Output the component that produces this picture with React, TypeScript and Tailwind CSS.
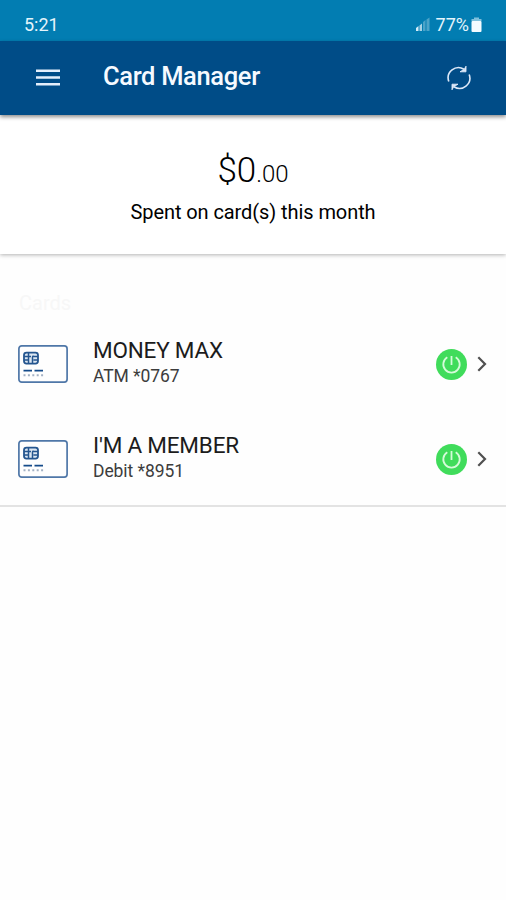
type Card = {
  name: string;
  detail: string;
};

const cards: Card[] = [
  { name: "MONEY MAX", detail: "ATM *0767" },
  { name: "I'M A MEMBER", detail: "Debit *8951" },
];

function SignalIcon() {
  return (
    <svg width="15" height="15" viewBox="0 0 15 15">
      <path d="M0 14v-3l2.5-2v5z" fill="#d3edf8" />
      <path d="M3.500 14V8.500L6 6.500V14z" fill="#a5d2e6" />
      <path d="M7 14V5L9.500 3v11z" fill="#4ba3c8" />
      <path d="M10.500 14V2.500L13.500 0.500V14z" fill="#4ba3c8" />
    </svg>
  );
}

function BatteryIcon() {
  return (
    <svg width="11" height="15" viewBox="0 0 11 15">
      <path d="M3 0.500h5v1.500h2.500v2H0.500v-2H3z" fill="#7fc0dc" />
      <rect x="0.500" y="4" width="10" height="11" rx="1" fill="#f4fbff" />
    </svg>
  );
}

function RefreshIcon() {
  return (
    <svg
      width="24"
      height="26"
      viewBox="0 0 24 26"
      fill="none"
      stroke="#dce8f8"
      strokeWidth="1.600"
    >
      <path d="M1.800 16.500A10.300 10.300 0 0 1 17 4.300" />
      <path d="M13 6.800h6V1.200L17.300 4.300z" fill="#dce8f8" strokeWidth="0.900" />
      <path d="M22.200 9.500A10.300 10.300 0 0 1 7 21.700" />
      <path d="M11 19.200h-6v5.600l1.700-3.100z" fill="#dce8f8" strokeWidth="0.900" />
    </svg>
  );
}

function CardIcon() {
  return (
    <svg width="50" height="38" viewBox="0 0 50 38" fill="none">
      <rect x="0.900" y="0.900" width="48.200" height="36.200" rx="2.800" stroke="#4f77a8" strokeWidth="1.700" />
      <rect x="6" y="7.600" width="14" height="11" rx="2.500" fill="#dce7f2" stroke="#25568f" strokeWidth="1.800" />
      <path
        d="M6 11.400h4.500M6 15h4.500M10.500 8v10.500M20 11.400h-4.500M20 15h-4.500M14.500 18.500v-6.500a1 1 0 0 1 1-1M10.500 11.400H13"
        stroke="#25568f"
        strokeWidth="1.500"
      />
      <path d="M5.500 25.700h8.500M16.500 25.700h8.500" stroke="#144b8a" strokeWidth="1.800" />
      <path d="M5.500 30.200h20" stroke="#a3b1c4" strokeWidth="2" strokeDasharray="2 2.400" />
    </svg>
  );
}

function PowerIcon() {
  return (
    <svg className="mt-[2px]" width="31" height="31" viewBox="0 0 31 31" fill="none">
      <circle cx="15.500" cy="15.500" r="15.500" fill="#40dc5b" />
      <path
        d="M11.300 8.300a8.200 8.200 0 1 0 8.400 0M15.500 7v9"
        stroke="#d5fbd9"
        strokeWidth="1.800"
      />
    </svg>
  );
}

function CardRow({ card }: { card: Card }) {
  return (
    <li className="flex h-[95px] items-center pl-[18px] pr-[19px]">
      <CardIcon />
      <div className="ml-[25px] flex-1 pb-[4px]">
        <p className="text-[22.500px] leading-[28px] tracking-[-0.200px] text-[#1c1c1c]">
          {card.name}
        </p>
        <p className="text-[17.500px] leading-[24px] tracking-[-0.080px] text-[#3c3c3c]">
          {card.detail}
        </p>
      </div>
      <PowerIcon />
      <svg
        className="ml-[10px] mt-px"
        width="10"
        height="16"
        viewBox="0 0 10 16"
        fill="none"
        stroke="#505050"
        strokeWidth="2.200"
      >
        <path d="M1.300 1.300L8 8l-6.700 6.700" />
      </svg>
    </li>
  );
}

export default function App() {
  return (
    <main className="h-[900px] w-full overflow-hidden bg-[#fefefe] font-['Roboto',sans-serif] text-black">
      <div className="flex h-[41px] items-center justify-between bg-[#027db2] pl-6 pr-6 pt-2 text-[#e5f5fc]">
        <span className="text-[18px]">5:21</span>
        <div className="flex items-center">
          <SignalIcon />
          <span className="ml-[5px] text-[18px]">77%</span>
          <span className="ml-[2px]">
            <BatteryIcon />
          </span>
        </div>
      </div>

      <header className="relative z-10 flex h-[74px] items-center bg-[#004c87] pl-9 pr-[35px] shadow-[0_2px_4px_rgba(0,0,0,0.450)]">
        <svg className="mb-[2px]" width="24" height="17" viewBox="0 0 24 17" fill="#e4eefb">
          <path d="M0 0.500h24v2.500H0zM0 7.200h24v2.500H0zM0 14h24v2.500H0z" />
        </svg>
        <h1 className="ml-[43px] flex-1 pb-[3px] text-[25.500px] font-medium tracking-[-0.350px] text-[#f6faff]">
          Card Manager
        </h1>
        <RefreshIcon />
      </header>

      <section className="flex h-[139px] flex-col items-center bg-white pt-[35px] shadow-[0_1px_4px_rgba(0,0,0,0.300)]">
        <p className="text-[35px] font-light leading-[42px]">
          $0<span className="text-[24px]">.00</span>
        </p>
        <p className="mt-[5px] text-[20px] leading-[24px] tracking-[-0.080px]">
          Spent on card(s) this month
        </p>
      </section>

      <section className="h-[253px] border-b-2 border-[#e3e3e3] pt-[37px]">
        <h2 className="pl-[19px] text-[20px] leading-[24px] text-[#f7f7f7]">Cards</h2>
        <ul className="pt-px">
          {cards.map((card) => (
            <CardRow key={card.name} card={card} />
          ))}
        </ul>
      </section>
    </main>
  );
}
